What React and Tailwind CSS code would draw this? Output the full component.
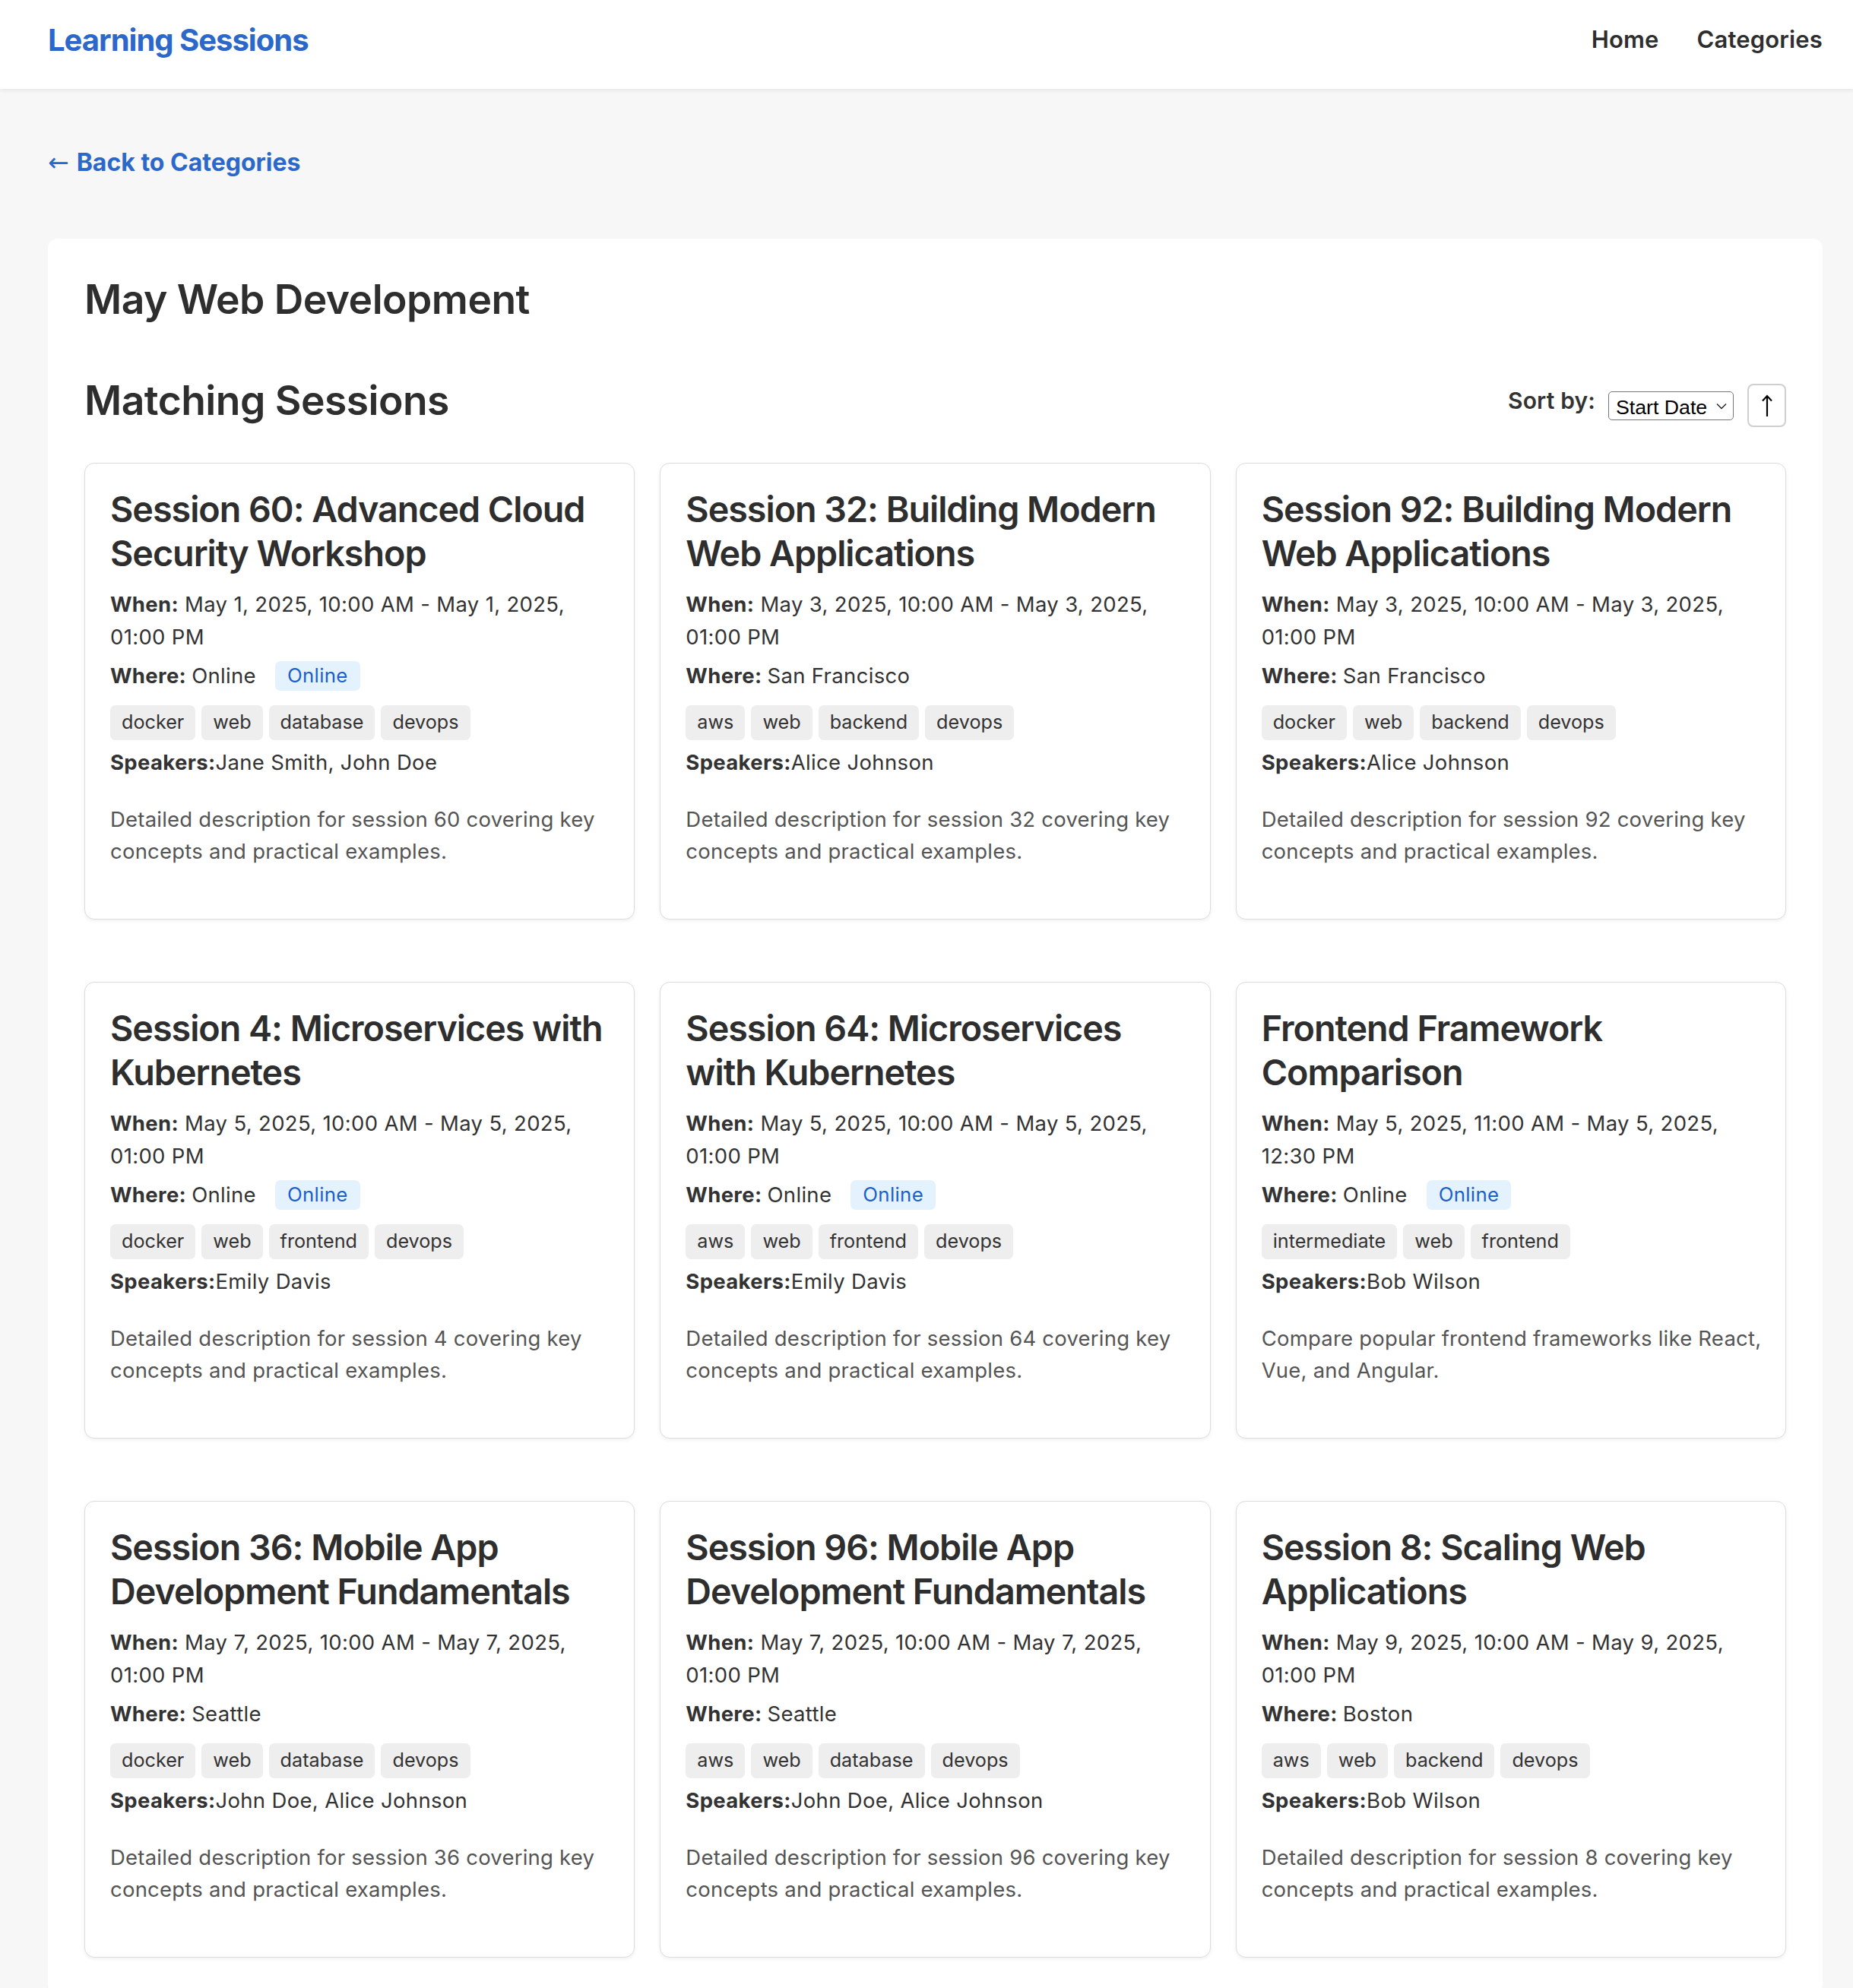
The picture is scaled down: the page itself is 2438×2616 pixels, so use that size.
import React from "react";

const sessions = [
  {
    title: ["Session 60: Advanced Cloud", "Security Workshop"],
    when: ["May 1, 2025, 10:00 AM - May 1, 2025,", "01:00 PM"],
    where: "Online",
    online: true,
    tags: ["docker", "web", "database", "devops"],
    speakers: "Jane Smith, John Doe",
    desc: ["Detailed description for session 60 covering key", "concepts and practical examples."],
  },
  {
    title: ["Session 32: Building Modern", "Web Applications"],
    when: ["May 3, 2025, 10:00 AM - May 3, 2025,", "01:00 PM"],
    where: "San Francisco",
    online: false,
    tags: ["aws", "web", "backend", "devops"],
    speakers: "Alice Johnson",
    desc: ["Detailed description for session 32 covering key", "concepts and practical examples."],
  },
  {
    title: ["Session 92: Building Modern", "Web Applications"],
    when: ["May 3, 2025, 10:00 AM - May 3, 2025,", "01:00 PM"],
    where: "San Francisco",
    online: false,
    tags: ["docker", "web", "backend", "devops"],
    speakers: "Alice Johnson",
    desc: ["Detailed description for session 92 covering key", "concepts and practical examples."],
  },
  {
    title: ["Session 4: Microservices with", "Kubernetes"],
    when: ["May 5, 2025, 10:00 AM - May 5, 2025,", "01:00 PM"],
    where: "Online",
    online: true,
    tags: ["docker", "web", "frontend", "devops"],
    speakers: "Emily Davis",
    desc: ["Detailed description for session 4 covering key", "concepts and practical examples."],
  },
  {
    title: ["Session 64: Microservices", "with Kubernetes"],
    when: ["May 5, 2025, 10:00 AM - May 5, 2025,", "01:00 PM"],
    where: "Online",
    online: true,
    tags: ["aws", "web", "frontend", "devops"],
    speakers: "Emily Davis",
    desc: ["Detailed description for session 64 covering key", "concepts and practical examples."],
  },
  {
    title: ["Frontend Framework", "Comparison"],
    when: ["May 5, 2025, 11:00 AM - May 5, 2025,", "12:30 PM"],
    where: "Online",
    online: true,
    tags: ["intermediate", "web", "frontend"],
    speakers: "Bob Wilson",
    desc: ["Compare popular frontend frameworks like React,", "Vue, and Angular."],
  },
  {
    title: ["Session 36: Mobile App", "Development Fundamentals"],
    when: ["May 7, 2025, 10:00 AM - May 7, 2025,", "01:00 PM"],
    where: "Seattle",
    online: false,
    tags: ["docker", "web", "database", "devops"],
    speakers: "John Doe, Alice Johnson",
    desc: ["Detailed description for session 36 covering key", "concepts and practical examples."],
  },
  {
    title: ["Session 96: Mobile App", "Development Fundamentals"],
    when: ["May 7, 2025, 10:00 AM - May 7, 2025,", "01:00 PM"],
    where: "Seattle",
    online: false,
    tags: ["aws", "web", "database", "devops"],
    speakers: "John Doe, Alice Johnson",
    desc: ["Detailed description for session 96 covering key", "concepts and practical examples."],
  },
  {
    title: ["Session 8: Scaling Web", "Applications"],
    when: ["May 9, 2025, 10:00 AM - May 9, 2025,", "01:00 PM"],
    where: "Boston",
    online: false,
    tags: ["aws", "web", "backend", "devops"],
    speakers: "Bob Wilson",
    desc: ["Detailed description for session 8 covering key", "concepts and practical examples."],
  },
];

function SessionCard({ s }) {
  return (
    <div className="bg-white border border-[#dcdcdc] rounded-[13px] shadow-[0_2px_5px_rgba(0,0,0,0.06)] px-[33px] pt-[31px] pb-[34px]">
      <h3 className="text-[46.7px] leading-[58.4px] font-semibold tracking-[-0.022em] text-[#2e2e2e] mb-[16px]">
        {s.title.map((l, i) => (
          <div key={i} className="whitespace-nowrap">{l}</div>
        ))}
      </h3>
      <div className="text-[27.5px] leading-[42.7px] tracking-[0.012em] text-[#333] mb-[9px]">
        <div className="whitespace-nowrap">
          <span className="font-bold">When:</span> {s.when[0]}
        </div>
        <div className="whitespace-nowrap">{s.when[1]}</div>
      </div>
      <div className="flex items-center h-[42.7px] text-[27.5px] tracking-[0.012em] text-[#333] mb-[17px] whitespace-nowrap">
        <span className="font-bold">Where:</span>
        <span className="ml-[7px]">{s.where}</span>
        {s.online && (
          <span className="ml-[25px] inline-flex items-center h-[39px] px-[16px] rounded-[7px] bg-[#e3f2fd] text-[#1c5fc9] text-[25.8px]">
            Online
          </span>
        )}
      </div>
      <div className="flex flex-wrap gap-[8px] mb-[8px]">
        {s.tags.map((t) => (
          <span
            key={t}
            className="inline-flex items-center h-[46px] px-[15px] rounded-[7px] bg-[#eeeeee] text-[#333] text-[25.2px]"
          >
            {t}
          </span>
        ))}
      </div>
      <div className="text-[27.5px] leading-[42.7px] tracking-[0.012em] text-[#333] whitespace-nowrap mb-[32px]">
        <span className="font-bold">Speakers:</span>
        {s.speakers}
      </div>
      <div className="text-[27.5px] leading-[42.7px] tracking-[0.008em] text-[#555] mb-[33px]">
        {s.desc.map((l, i) => (
          <div key={i} className="whitespace-nowrap">{l}</div>
        ))}
      </div>
    </div>
  );
}

export default function App() {
  return (
    <div className="h-screen overflow-hidden bg-[#f7f7f7] font-['Inter','Noto_Sans',sans-serif] text-[#333]">
      <header className="h-[117px] bg-white shadow-[0_2px_6px_rgba(0,0,0,0.08)] pl-[63px] pr-[40px] pb-[12px] flex items-center justify-between relative">
        <div className="text-[40px] font-bold tracking-[-0.025em] text-[#2b68c9]">Learning Sessions</div>
        <nav className="flex items-center gap-[50px] text-[31px] font-semibold tracking-[0.005em] text-[#2e2e2e]">
          <span>Home</span>
          <span>Categories</span>
        </nav>
      </header>

      <main className="pl-[63px] pr-[40px] pt-[74px] pb-[80px]">
        <div className="h-[45px] flex items-center mb-[78px] text-[32px] font-bold text-[#2b68c9]">
          <span className="font-normal mr-[10px] font-['DejaVu_Sans',sans-serif] text-[33px]">←</span>
          <span>Back to Categories</span>
        </div>

        <div className="bg-white rounded-[13px] p-[48px]">
          <h1 className="text-[53.4px] leading-[64px] font-semibold tracking-[-0.01em] text-[#2e2e2e]">
            May Web Development
          </h1>

          <div className="mt-[69px] flex items-start justify-between">
            <h2 className="text-[53.4px] leading-[64px] font-semibold tracking-[-0.01em] text-[#2e2e2e]">
              Matching Sessions
            </h2>
            <div className="flex items-center mt-[10px]">
              <span className="text-[30px] font-semibold tracking-[0.005em] text-[#333] mb-[12px]">Sort by:</span>
              <div className="relative ml-[17px]">
                <select
                  defaultValue="start"
                  className="appearance-none w-[165px] h-[38px] border-[1.5px] border-[#767676] rounded-[5px] bg-white pl-[9px] pr-[30px] text-[26.7px] text-black font-['Liberation_Sans',Arial,sans-serif]"
                >
                  <option value="start">Start Date</option>
                  <option value="title">Title</option>
                </select>
                <svg
                  className="absolute right-[9px] top-[15px] pointer-events-none"
                  width="14"
                  height="9"
                  viewBox="0 0 14 9"
                  fill="none"
                >
                  <path d="M1 1.5 L7 7.5 L13 1.5" stroke="#222" strokeWidth="1.4" />
                </svg>
              </div>
              <button className="ml-[18px] w-[51px] h-[57px] border-2 border-[#cfcfcf] rounded-[8px] bg-white flex items-center justify-center">
                <svg width="14" height="30" viewBox="0 0 14 30" fill="none">
                  <path d="M7 29 V2" stroke="#000" strokeWidth="2.2" />
                  <path d="M1 8.5 L7 2 L13 8.5" stroke="#000" strokeWidth="2.2" fill="none" />
                </svg>
              </button>
            </div>
          </div>

          <div className="mt-[47px] grid grid-cols-3 gap-x-[33px] gap-y-[82px]">
            {sessions.map((s, i) => (
              <SessionCard key={i} s={s} />
            ))}
          </div>
        </div>
      </main>
    </div>
  );
}
